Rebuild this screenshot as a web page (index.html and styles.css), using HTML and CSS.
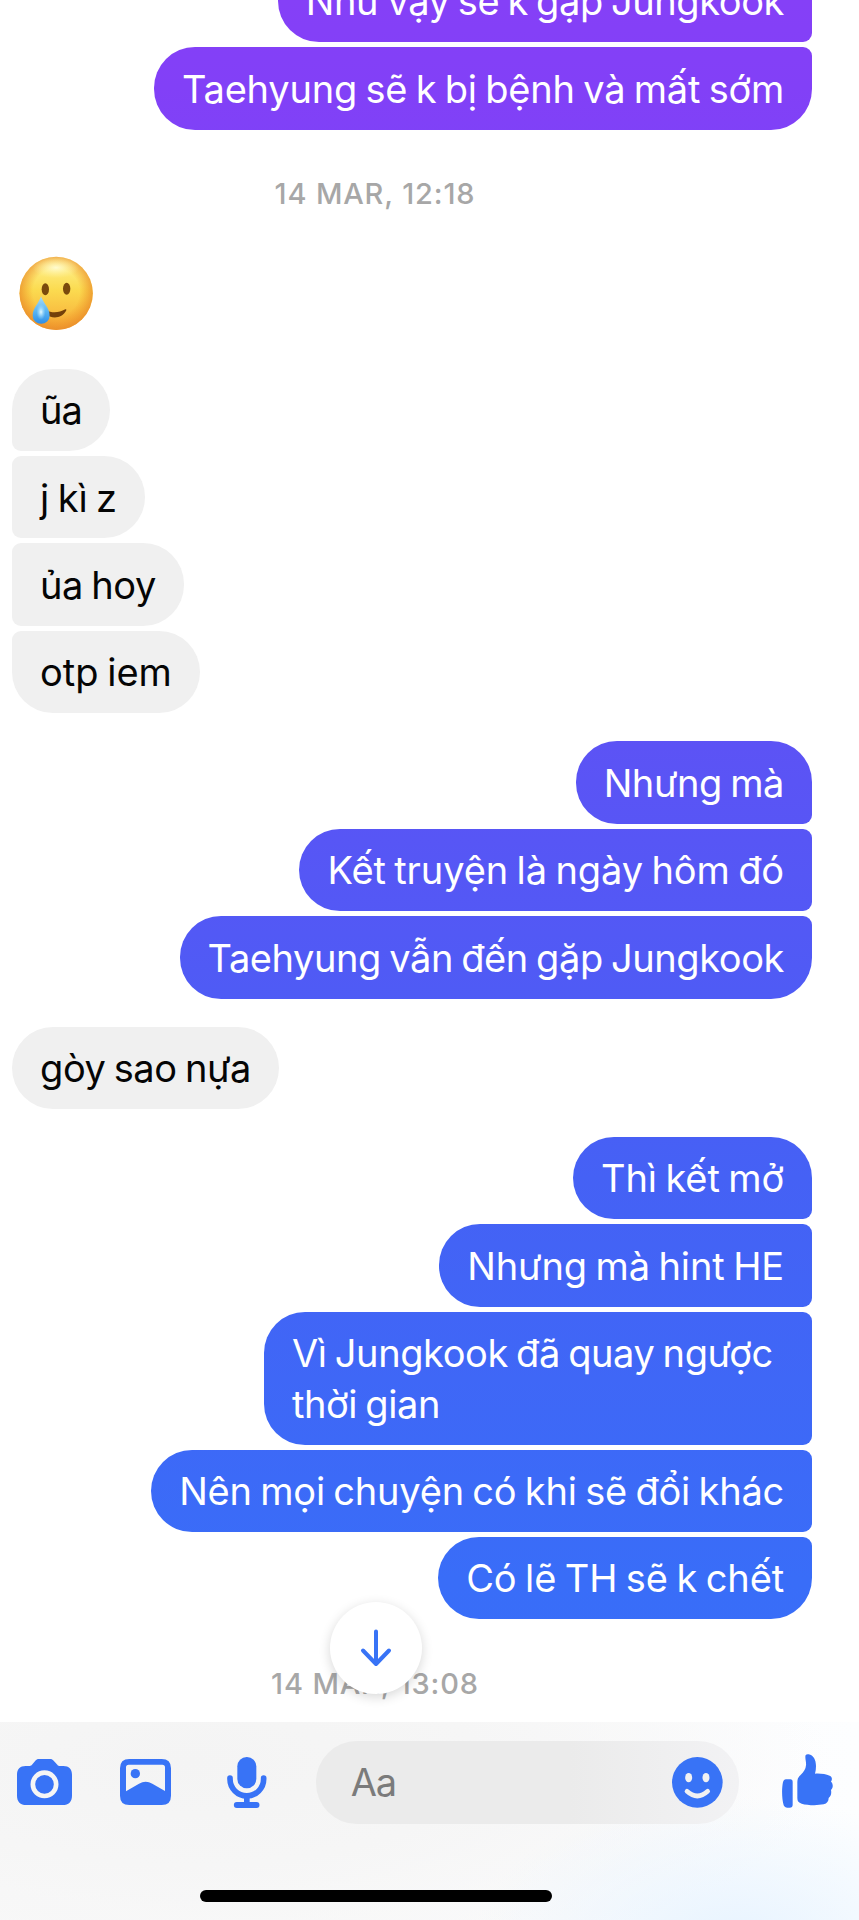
FILE: index.html
```html
<!DOCTYPE html>
<html lang="vi">
<head>
<meta charset="utf-8">
<title>Chat</title>
<link rel="stylesheet" href="styles.css">
</head>
<body>
<div class="screen">
  <main class="thread">
    <section class="group out first">
      <p class="bubble tight">Như vậy sẽ k gặp Jungkook</p>
      <p class="bubble snug">Taehyung sẽ k bị bệnh và mất sớm</p>
    </section>
    <div class="date"><span class="label">14 MAR, 12:18</span></div>
    <svg class="emoji" viewBox="58 47 223 224" role="img" aria-label="smiling face with tear">
      <defs>
        <linearGradient id="face" x1="0" y1="0" x2="0" y2="1">
          <stop offset="0" stop-color="#fff49a"/><stop offset=".45" stop-color="#fbdb50"/><stop offset="1" stop-color="#f7a836"/>
        </linearGradient>
        <radialGradient id="rim" cx=".5" cy=".48" r=".53">
          <stop offset=".6" stop-color="#f09020" stop-opacity="0"/><stop offset="1" stop-color="#e88a2a" stop-opacity=".85"/>
        </radialGradient>
        <radialGradient id="shine" cx=".5" cy=".5" r=".5">
          <stop offset="0" stop-color="#fffbd0"/><stop offset="1" stop-color="#fff29a" stop-opacity="0"/>
        </radialGradient>
        <linearGradient id="tear" x1="0" y1="0" x2="0" y2="1">
          <stop offset="0" stop-color="#a9dcf8"/><stop offset=".55" stop-color="#58b4f3"/><stop offset="1" stop-color="#2f8ee6"/>
        </linearGradient>
        <radialGradient id="tearShine" cx=".5" cy=".5" r=".5">
          <stop offset="0" stop-color="#e8fbff"/><stop offset="1" stop-color="#9fdcfa" stop-opacity="0"/>
        </radialGradient>
      </defs>
      <circle cx="169.500" cy="159" r="110" fill="url(#face)"/>
      <circle cx="169.500" cy="159" r="110" fill="url(#rim)"/>
      <ellipse cx="169" cy="82" rx="70" ry="32" fill="url(#shine)"/>
      <ellipse cx="137" cy="147" rx="11" ry="18" fill="#7a4a0c"/>
      <ellipse cx="201" cy="145" rx="11" ry="18" fill="#7a4a0c"/>
      <path d="M138 210C158 219 178 218 197 207Q201 206 200 210C187 237 155 236 138 222Z" fill="#74400a"/>
      <path d="M124 168C130 187 150 203 150 226A25 24 0 0 1 99 226C99 203 119 187 124 168Z" fill="url(#tear)"/>
      <ellipse cx="124" cy="215" rx="14" ry="24" fill="url(#tearShine)"/>
    </svg>
    <section class="group in">
      <p class="bubble tighter">ũa</p>
      <p class="bubble near">j kì z</p>
      <p class="bubble tight">ủa hoy</p>
      <p class="bubble">otp iem</p>
    </section>
    <section class="group out">
      <p class="bubble tight">Nhưng mà</p>
      <p class="bubble near">Kết truyện là ngày hôm đó</p>
      <p class="bubble tight">Taehyung vẫn đến gặp Jungkook</p>
    </section>
    <section class="group in">
      <p class="bubble tight">gòy sao nựa</p>
    </section>
    <section class="group out">
      <p class="bubble near">Thì kết mở</p>
      <p class="bubble near">Nhưng mà hint HE</p>
      <p class="bubble tight wide">Vì Jungkook đã quay ngược<br>thời gian</p>
      <p class="bubble snug">Nên mọi chuyện có khi sẽ đổi khác</p>
      <p class="bubble near">Có lẽ TH sẽ k chết</p>
    </section>
    <div class="date last"><span class="label">14 MAR, 13:08</span>
      <button class="jump" aria-label="Scroll down">
        <svg width="32" height="38" viewBox="0 0 32 38"><path d="M16 2.500V33M3 21.500L16 35L29 21.500" fill="none" stroke="currentColor" stroke-width="4" stroke-linecap="round" stroke-linejoin="round"/></svg>
      </button>
    </div>
  </main>
  <footer class="composer">
    <div class="tools">
      <svg class="camera" viewBox="51 147 165 138"><path fill="currentColor" fill-rule="evenodd" d="M117 147H150C155 147 158 149 161 152L172 164C174 167 177 168 181 168H190C207 168 216 178 216 194V257C216 275 206 285 188 285H79C61 285 51 275 51 257V194C51 178 60 168 77 168H86C90 168 93 167 96 164L106 152C109 149 112 147 117 147ZM133.500 181A42 42 0 1 0 133.500 265A42 42 0 1 0 133.500 181ZM133.500 195A28 28 0 1 1 133.500 251A28 28 0 1 1 133.500 195Z"/></svg>
      <svg class="photo" viewBox="360 147 153 138"><path fill="currentColor" fill-rule="evenodd" d="M388 147H485Q513 147 513 175V257Q513 285 485 285H388Q360 285 360 257V175Q360 147 388 147ZM386 164Q378 164 378 172V244L417 221Q437 210 457 221L495 243V172Q495 164 487 164Z"/><circle cx="406" cy="191" r="14" fill="currentColor"/></svg>
      <svg class="mic" viewBox="681 140 119 153"><rect x="712" y="140" width="57" height="94" rx="28" fill="currentColor"/><path d="M690 203V206A50.500 50.500 0 0 0 791 206V203" fill="none" stroke="currentColor" stroke-width="17" stroke-linecap="round"/><path d="M740.500 256V284" stroke="currentColor" stroke-width="17"/><path d="M710.500 284H769.500" stroke="currentColor" stroke-width="18" stroke-linecap="round"/></svg>
      <div class="field">
        <span class="hint">Aa</span>
        <svg class="smile" viewBox="729 140 152 152"><circle cx="805" cy="216" r="76" fill="currentColor"/><ellipse cx="779" cy="202" rx="10.500" ry="14" fill="#f1f1f2"/><ellipse cx="831" cy="202" rx="10.500" ry="14" fill="#f1f1f2"/><path d="M774 243Q805 271 836 243" fill="none" stroke="#f1f1f2" stroke-width="14" stroke-linecap="round"/></svg>
      </div>
      <svg class="like" viewBox="1059 132 153 161"><path fill="currentColor" d="M1070 208H1084Q1091 208 1091 216V284Q1091 293 1082 293H1074Q1067 293 1064 286C1058 266 1058 234 1062 216Q1064 208 1070 208ZM1129 140C1129 134 1133 132 1139 133C1153 136 1161 149 1161 168C1161 176 1160 184 1158 191C1174 190 1190 192 1202 197C1209 200 1211 208 1206 215C1213 221 1213 234 1206 240C1208 249 1206 258 1199 264C1199 274 1194 280 1184 283C1164 287 1135 286 1118 281C1109 278 1105 274 1105 264V216C1105 207 1108 202 1114 196C1125 185 1130 178 1131 166C1132 157 1129 149 1129 140Z"/></svg>
    </div>
    <div class="home"></div>
  </footer>
</div>
</body>
</html>
```
FILE: styles.css
```css
* { box-sizing: border-box; }
body { margin: 0; background: #fff; font-family: Inter, "Noto Sans", sans-serif; }
p { margin: 0; }
.screen { position: relative; height: 1920px; display: flex; flex-direction: column; overflow: hidden; color: #050505; }
.thread { flex: 0 0 1722px; padding: 0 47px 0 12px; display: flex; flex-direction: column; }
.group { display: flex; flex-direction: column; gap: 5px; align-items: flex-start; margin-bottom: 28px; }
.group.first { margin: -40.100px 0 0; }
.out { align-items: flex-end; }
.bubble { padding: 16.500px 28px 15.500px; font-size: 38px; line-height: 50.400px; word-spacing: -2px; white-space: nowrap; border-radius: 41px; }
.near { letter-spacing: -.12px; }
.snug { letter-spacing: -.22px; }
.tight { letter-spacing: -.42px; }
.tighter { letter-spacing: -.9px; }
.wide { width: 548px; }
.in .bubble { background: #f0f0f0; border-top-left-radius: 9px; border-bottom-left-radius: 9px; }
.in .bubble:first-child { border-top-left-radius: 41px; }
.in .bubble:last-child { border-bottom-left-radius: 41px; }
.out .bubble { color: #fff; border-top-right-radius: 9px; border-bottom-right-radius: 9px; background: linear-gradient(#8540f7 0, #8240f7 88px, #5a54f5 782px, #4561f5 1178px, #396df8 1578px, #366ff9 1920px) fixed; }
.out:not(.first) .bubble:first-child { border-top-right-radius: 41px; }
.out .bubble:last-child { border-bottom-right-radius: 41px; }
.date { height: 126.300px; margin: 0 62px 0 -12px; padding-top: 2px; display: flex; justify-content: center; align-items: center; font-size: 29px; font-weight: 500; letter-spacing: .85px; color: #a7a7a7; }
.emoji { width: 74.330px; height: 74.660px; margin: 0 0 38px 7px; flex: none; }
.date.last { position: relative; height: 72px; padding-top: 0; }
.jump { position: absolute; left: 329.500px; top: -45px; width: 92px; height: 92px; border: 0; border-radius: 50%; padding: 0; background: #fff; color: #3873f6; box-shadow: 0 3px 12px rgba(0,0,0,.16); display: flex; align-items: center; justify-content: center; }
.composer { flex: 1; padding-top: 19px; display: flex; flex-direction: column; align-items: flex-start; color: #3873f6; background: radial-gradient(ellipse 260px 140px at 735px 215px, #e8f4ff, rgba(240,248,255,0)), radial-gradient(ellipse 640px 230px at 190px 40px, #f4f4f4, #f6f6f6 45%, rgba(250,250,250,0)), linear-gradient(90deg, #f9f9f9, #fbfbfc 65%, #fdfeff); }
.tools { display: flex; align-items: center; height: 82.500px; width: 100%; padding-left: 17px; }
.tools svg { flex: none; }
.camera { width: 55px; height: 46px; margin-right: 48px; }
.photo { width: 51px; height: 46px; margin-right: 56px; }
.mic { width: 39.670px; height: 51px; margin-right: 49px; }
.field { width: 423px; height: 82.500px; border-radius: 41px; background: linear-gradient(90deg, #ebebeb 60%, #f2f2f4); display: flex; align-items: center; justify-content: space-between; padding: 0 16px 0 35px; margin-right: 43px; }
.hint { font-size: 38px; letter-spacing: -1px; color: #7b7b7b; }
.smile { width: 50.670px; height: 50.670px; }
.like { width: 51px; height: 53.670px; margin-top: -2px; }
.home { width: 352px; height: 11.500px; border-radius: 6px; background: #000; margin: 66.500px 0 0 200px; }
```
